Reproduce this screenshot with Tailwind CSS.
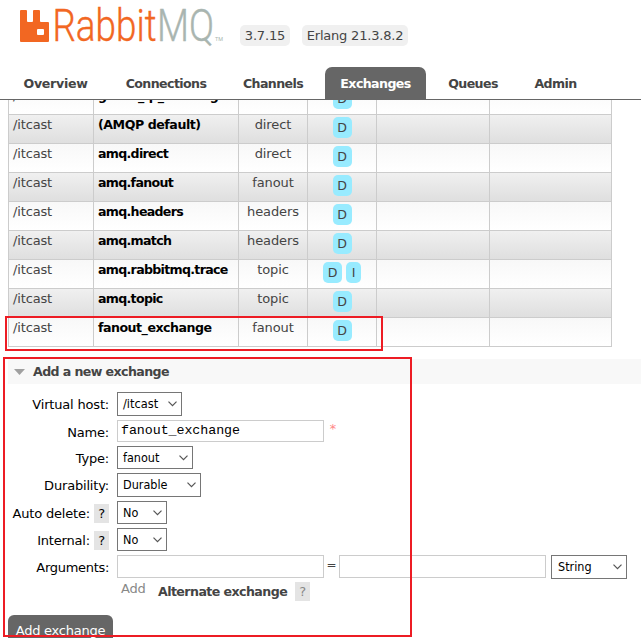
<!DOCTYPE html>
<html lang="en">
<head>
<meta charset="utf-8">
<title>RabbitMQ Management</title>
<script src="https://cdn.jsdelivr.net/npm/@tailwindcss/browser@4"></script>
</head>
<body class="relative w-[641px] h-[638px] overflow-hidden bg-white font-['DejaVu_Sans',sans-serif] text-[13px] leading-[20px] text-[#444]">
<header class="h-[100px] border-b border-[#666] flex flex-col justify-between">
  <div class="flex items-start pl-[20px] pt-[8px]">
    <svg class="w-[204px] h-[36px] shrink-0 overflow-visible" viewBox="0 0 204 36" role="img" aria-label="RabbitMQ">
      <path fill="#f26722" fill-rule="evenodd" d="M1 2h5q1 0 1 1v10q0 1 1 1h4q1 0 1-1V3q0-1 1-1h5q1 0 1 1v10q0 1 1 1h7q1 0 1 1v18q0 1-1 1H1q-1 0-1-1V3q0-1 1-1zM18 21q-1 0-1 1v4q0 1 1 1h5q1 0 1-1v-4q0-1-1-1z"/>
      <text x="32.500" y="33" textLength="104" lengthAdjust="spacingAndGlyphs" font-family="Roboto" font-weight="300" font-size="44" fill="#f26722" stroke="#f26722" stroke-width=".4">Rabbit</text>
      <text x="137" y="33" textLength="57" lengthAdjust="spacingAndGlyphs" font-family="Roboto" font-weight="300" font-size="44" fill="#a9b5b0" stroke="#a9b5b0" stroke-width=".4">MQ</text>
      <text x="195" y="33" textLength="8" lengthAdjust="spacingAndGlyphs" font-family="Roboto" font-size="6" fill="#a9b5b0">TM</text>
    </svg>
    <span class="mt-[17px] ml-[16px] w-[50px] h-[21px] rounded-[5px] bg-[#f0f0f0] text-center leading-[21px] tracking-[-0.15px]">3.7.15</span>
    <span class="mt-[17px] ml-[12px] w-[106px] h-[21px] rounded-[5px] bg-[#f0f0f0] text-center leading-[21px] tracking-[-0.2px]">Erlang 21.3.8.2</span>
  </div>
  <nav class="flex h-[32px] pl-[7px] font-bold leading-[33px] text-center whitespace-nowrap text-[12.6px] tracking-[-0.6px]">
    <a class="w-[97px] tracking-[-0.3px]">Overview</a>
    <a class="w-[112px] ml-[6px]">Connections</a>
    <a class="w-[92px] ml-[5px]">Channels</a>
    <a class="w-[101px] ml-[6px] rounded-t-[7px] bg-[#666] text-white">Exchanges</a>
    <a class="w-[82px] ml-[6px]">Queues</a>
    <a class="w-[73px] ml-[5px]">Admin</a>
  </nav>
</header>

<main>
  <div id="exchanges" class="ml-[8px] w-[604px] h-[247px] overflow-hidden flex flex-col justify-end border-r border-b border-[#ccc]"></div>

  <section>
    <h2 class="mt-[12px] ml-[8px] h-[25px] bg-[#f8f8f8] flex items-center font-bold text-[12.6px] tracking-[-0.6px]">
      <svg class="ml-[6px] mr-[8px] w-[11px] h-[6px]" viewBox="0 0 11 6"><path fill="#a0a0a0" d="M0 0h11L5.500 6z"/></svg>Add a new exchange
    </h2>
    <form class="pt-[8px] text-black tracking-[-0.18px]">
      <div class="flex h-[28px]">
        <label class="w-[109px] mr-[8px] text-right leading-[25px]">Virtual host:</label>
        <div class="w-[65px] h-[24px] border border-[#767676] flex items-center justify-between pl-[5px] pr-[4px] tracking-normal font-['DejaVu_Sans_Condensed','DejaVu_Sans',sans-serif] text-[12.7px]">/itcast<svg class="w-[9px] h-[6px]" viewBox="0 0 9 6"><path d="M.5.7l4 4 4-4" fill="none" stroke="#555" stroke-width="1.200"/></svg></div>
      </div>
      <div class="flex h-[26px]">
        <label class="w-[109px] mr-[8px] text-right leading-[25px]">Name:</label>
        <div class="w-[207px] h-[22px] border border-[#ccc] pl-[3px] leading-[19px] text-[13.3px] tracking-[-0.05px] font-['Liberation_Mono',monospace]">fanout_exchange</div>
        <span class="ml-[5px] leading-[18px] text-[#f88] text-[13px] font-['DejaVu_Sans_Mono',monospace]">*</span>
      </div>
      <div class="flex h-[27px]">
        <label class="w-[109px] mr-[8px] text-right leading-[25px]">Type:</label>
        <div class="w-[76px] h-[23px] border border-[#767676] flex items-center justify-between pl-[5px] pr-[4px] tracking-normal font-['DejaVu_Sans_Condensed','DejaVu_Sans',sans-serif] text-[12.5px]">fanout<svg class="w-[9px] h-[6px]" viewBox="0 0 9 6"><path d="M.5.7l4 4 4-4" fill="none" stroke="#555" stroke-width="1.200"/></svg></div>
      </div>
      <div class="flex h-[28px]">
        <label class="w-[109px] mr-[8px] text-right leading-[25px]">Durability:</label>
        <div class="w-[84px] h-[24px] border border-[#767676] flex items-center justify-between pl-[5px] pr-[4px] tracking-normal font-['DejaVu_Sans_Condensed','DejaVu_Sans',sans-serif] text-[12.5px]">Durable<svg class="w-[9px] h-[6px]" viewBox="0 0 9 6"><path d="M.5.7l4 4 4-4" fill="none" stroke="#555" stroke-width="1.200"/></svg></div>
      </div>
      <div class="flex h-[27px]">
        <label class="w-[109px] mr-[8px] flex justify-end leading-[25px] whitespace-nowrap">Auto delete:<span class="ml-[4px] mt-[3px] w-[15px] h-[19px] bg-[#e4e4e4] text-center leading-[19px]">?</span></label>
        <div class="w-[50px] h-[23px] border border-[#767676] flex items-center justify-between pl-[5px] pr-[4px] tracking-normal font-['DejaVu_Sans_Condensed','DejaVu_Sans',sans-serif] text-[12.5px]">No<svg class="w-[9px] h-[6px]" viewBox="0 0 9 6"><path d="M.5.7l4 4 4-4" fill="none" stroke="#555" stroke-width="1.200"/></svg></div>
      </div>
      <div class="flex h-[27px]">
        <label class="w-[109px] mr-[8px] flex justify-end leading-[25px] whitespace-nowrap">Internal:<span class="ml-[4px] mt-[3px] w-[15px] h-[19px] bg-[#e4e4e4] text-center leading-[19px]">?</span></label>
        <div class="w-[50px] h-[23px] border border-[#767676] flex items-center justify-between pl-[5px] pr-[4px] tracking-normal font-['DejaVu_Sans_Condensed','DejaVu_Sans',sans-serif] text-[12.5px]">No<svg class="w-[9px] h-[6px]" viewBox="0 0 9 6"><path d="M.5.7l4 4 4-4" fill="none" stroke="#555" stroke-width="1.200"/></svg></div>
      </div>
      <div class="flex h-[27px]">
        <label class="w-[109px] mr-[8px] text-right leading-[25px] tracking-[-0.3px]">Arguments:</label>
        <div class="w-[207px] h-[23px] border border-[#ccc]"></div>
        <span class="w-[15px] text-center leading-[21px] text-[12px] text-[#444]">=</span>
        <div class="w-[207px] h-[23px] border border-[#ccc]"></div>
        <div class="ml-[5px] w-[76px] h-[24px] border border-[#767676] flex items-center justify-between pl-[6px] pr-[4px] tracking-normal font-['DejaVu_Sans_Condensed','DejaVu_Sans',sans-serif] text-[12.5px]">String<svg class="w-[9px] h-[6px]" viewBox="0 0 9 6"><path d="M.5.7l4 4 4-4" fill="none" stroke="#555" stroke-width="1.200"/></svg></div>
      </div>
      <div class="flex h-[33px] pl-[121px] text-[#888] whitespace-nowrap">
        <span class="w-[37px] leading-[14px]">Add</span>
        <b class="w-[137px] leading-[19px] text-[#444] text-[12.6px] tracking-[-0.57px]">Alternate exchange</b>
        <span class="w-[15px] h-[19px] bg-[#e4e4e4] text-center leading-[19px]">?</span>
      </div>
      <button type="button" class="block ml-[8px] w-[105px] h-[31px] rounded-[6px] bg-[#666] text-white text-center leading-[31px] whitespace-nowrap tracking-[-0.25px]">Add exchange</button>
    </form>
  </section>
</main>

<div class="absolute left-[5px] top-[316px] w-[378px] h-[35px] border-2 border-[#ed1c24]"></div>
<div class="absolute left-[3px] top-[357px] w-[409px] h-[280px] border-2 border-[#ed1c24]"></div>

<script>
  const exchanges = [
    ['guest_ip_missing', 'direct', ['D']],
    ['(AMQP default)', 'direct', ['D']],
    ['amq.direct', 'direct', ['D']],
    ['amq.fanout', 'fanout', ['D']],
    ['amq.headers', 'headers', ['D']],
    ['amq.match', 'headers', ['D']],
    ['amq.rabbitmq.trace', 'topic', ['D', 'I']],
    ['amq.topic', 'topic', ['D']],
    ['fanout_exchange', 'fanout', ['D']],
  ];
  document.getElementById('exchanges').innerHTML = exchanges.map(([name, type, flags], i) => `
    <div class="grid shrink-0 h-[29px] grid-cols-[85px_145px_69px_69px_113px_122px] border-t border-[#ccc] ${i % 2 ? 'bg-linear-to-b from-[#f0f0f0] to-[#dfdfdf]' : 'bg-linear-to-b from-[#f8f8f8] to-white'}">
      <div class="border-l border-[#ccc] pl-[4px] tracking-[-0.15px]">/itcast</div>
      <div class="border-l border-[#ccc] pl-[4px] font-bold text-black text-[12.6px] whitespace-nowrap ${i === 1 ? 'tracking-[-0.45px]' : i === 8 ? 'tracking-[-0.5px]' : i === 0 ? 'tracking-normal' : 'tracking-[-0.7px]'}">${name}</div>
      <div class="border-l border-[#ccc] text-center tracking-[-0.1px]">${type}</div>
      <div class="border-l border-[#ccc] flex justify-center gap-[4px] pt-[2px]">${flags.map(f =>
        `<span class="h-[21px] ${f === 'D' ? 'w-[19px]' : 'w-[15px]'} text-center text-[12.6px] rounded-[5px] bg-[#98ebff] leading-[21px]">${f}</span>`).join('')}</div>
      <div class="border-l border-[#ccc]"></div>
      <div class="border-l border-[#ccc]"></div>
    </div>`).join('');
</script>
</body>
</html>
